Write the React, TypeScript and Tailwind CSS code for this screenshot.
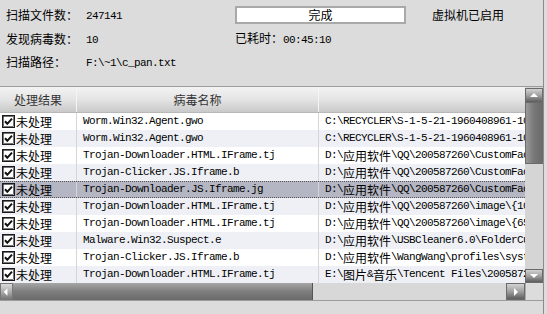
import React from "react";

const CJK = /[\u3000-\u9fff\uff00-\uffef]/;

// mixes the bitmap-ish mono look for ascii with 12px CJK glyphs
const Txt = ({ s }: { s: string }) => {
  const parts = s.match(/[\u3000-\u9fff\uff00-\uffef]+|[^\u3000-\u9fff\uff00-\uffef]+/g) || [];
  return (
    <>
      {parts.map((p, i) =>
        CJK.test(p) ? (
          <span key={i} className="font-['Noto_Sans_CJK_SC',sans-serif] text-[12px] tracking-normal">
            {p}
          </span>
        ) : (
          <span key={i} className="font-['Liberation_Mono',monospace] text-[11px] tracking-[-0.6px] whitespace-pre">
            {p}
          </span>
        )
      )}
    </>
  );
};

const rows = [
  { name: "Worm.Win32.Agent.gwo", path: "C:\\RECYCLER\\S-1-5-21-1960408961-1004336348" },
  { name: "Worm.Win32.Agent.gwo", path: "C:\\RECYCLER\\S-1-5-21-1960408961-1004336348" },
  { name: "Trojan-Downloader.HTML.IFrame.tj", path: "D:\\应用软件\\QQ\\200587260\\CustomFace" },
  { name: "Trojan-Clicker.JS.Iframe.b", path: "D:\\应用软件\\QQ\\200587260\\CustomFace" },
  { name: "Trojan-Downloader.JS.Iframe.jg", path: "D:\\应用软件\\QQ\\200587260\\CustomFace" },
  { name: "Trojan-Downloader.HTML.IFrame.tj", path: "D:\\应用软件\\QQ\\200587260\\image\\{10A3" },
  { name: "Trojan-Downloader.HTML.IFrame.tj", path: "D:\\应用软件\\QQ\\200587260\\image\\{65B2" },
  { name: "Malware.Win32.Suspect.e", path: "D:\\应用软件\\USBCleaner6.0\\FolderCure" },
  { name: "Trojan-Clicker.JS.Iframe.b", path: "D:\\应用软件\\WangWang\\profiles\\system" },
  { name: "Trojan-Downloader.HTML.IFrame.tj", path: "E:\\图片&音乐\\Tencent Files\\200587260" },
];

const Check = () => (
  <svg width="13" height="13" viewBox="0 0 13 13" className="shrink-0">
    <rect x="0.5" y="0.5" width="12" height="12" fill="#fff" stroke="#1a1a1a" />
    <rect x="1.5" y="1.5" width="10" height="10" fill="none" stroke="#1a1a1a" strokeWidth="0.6" />
    <path d="M3 6.3 L5.3 8.8 L10 3.6" fill="none" stroke="#111" strokeWidth="2" />
  </svg>
);

const Arrow = ({ dir }: { dir: "up" | "down" | "left" | "right" }) => {
  const d = {
    up: "M2 7 L6 3 L10 7 Z",
    down: "M2 4 L6 8 L10 4 Z",
    left: "M7 2 L3 6 L7 10 Z",
    right: "M4 2 L8 6 L4 10 Z",
  }[dir];
  return (
    <svg width="12" height="12" viewBox="0 0 12 12">
      <path d={d} fill="#fff" />
    </svg>
  );
};

export default function App() {
  return (
    <div className="w-[547px] h-[314px] bg-[#dcdcdc] overflow-hidden text-black font-['Noto_Sans_CJK_SC',sans-serif] text-[12px]">
      <div className="w-[544px] h-[314px] border-r border-[#8c8c8c] flex flex-col">
        {/* summary */}
        <div className="h-[86px] pt-[3px] pl-[6px] flex flex-col">
          <div className="h-[24px] flex items-center">
            <div className="w-[80px]">扫描文件数：</div>
            <div className="w-[149px]"><Txt s="247141" /></div>
            <div className="w-[171px] h-[18px] border-2 border-[#a9a9a9] bg-white flex items-center justify-center leading-none">
              完成
            </div>
            <div className="ml-[26px]">虚拟机已启用</div>
          </div>
          <div className="h-[24px] flex items-center">
            <div className="w-[80px]">发现病毒数：</div>
            <div className="w-[149px]"><Txt s="10" /></div>
            <div><Txt s="已耗时：00:45:10" /></div>
          </div>
          <div className="h-[22px] flex items-center">
            <div className="w-[80px]">扫描路径：</div>
            <div><Txt s="F:\~1\c_pan.txt" /></div>
          </div>
        </div>

        {/* table */}
        <div className="border-t border-[#9c9c9c] flex">
          <div className="w-[525px] overflow-hidden">
            <div className="h-[26px] flex border-b border-[#b8b8b8] bg-linear-to-b from-[#f3f3f3] via-[#e4e4e4] to-[#c9c9c9] text-[#333] text-[12px]">
              <div className="w-[77px] border-r border-[#f4f4f4] flex items-center justify-center">处理结果</div>
              <div className="w-[242px] border-r border-[#f4f4f4] flex items-center justify-center">病毒名称</div>
              <div className="flex-1" />
            </div>
            {rows.map((r, i) => {
              const sel = i === 4;
              const bg = sel ? "bg-[#b4b6c3]" : i % 2 === 1 ? "bg-[#eef0f5]" : "bg-white";
              return (
                <div
                  key={i}
                  className={`h-[17px] flex whitespace-nowrap ${bg} ${
                    sel ? "border-y border-dotted border-[#555]" : ""
                  }`}
                >
                  <div className="w-[77px] shrink-0 border-r border-[#d6d6d6] flex items-center pl-[2px] gap-[1px]">
                    <Check />
                    <span>未处理</span>
                  </div>
                  <div className="w-[242px] shrink-0 border-r border-[#d6d6d6] flex items-center pl-[6px] overflow-hidden">
                    <Txt s={r.name} />
                  </div>
                  <div className="flex-1 flex items-center pl-[6px] overflow-hidden">
                    <Txt s={r.path} />
                  </div>
                </div>
              );
            })}
          </div>

          {/* vertical scrollbar */}
          <div className="w-[18px] flex flex-col bg-[#d5d5d5]">
            <div className="mt-[1px] h-[15px] border border-[#6a6a6a] bg-linear-to-b from-[#d2d2d2] via-[#a0a0a0] to-[#5e5e5e] flex items-center justify-center">
              <Arrow dir="up" />
            </div>
            <div className="h-[61px] border-x border-b border-[#6a6a6a] bg-linear-to-r from-[#9a9a9a] via-[#777] to-[#6c6c6c]" />
            <div className="flex-1" />
            <div className="h-[14px] border border-[#6a6a6a] bg-linear-to-b from-[#d2d2d2] via-[#a0a0a0] to-[#5e5e5e] flex items-center justify-center">
              <Arrow dir="down" />
            </div>
          </div>
        </div>

        {/* horizontal scrollbar */}
        <div className="h-[18px] flex bg-[#d8d8d8] border-b border-[#9c9c9c]">
          <div className="w-[13px] border border-[#777] bg-linear-to-b from-[#dadada] via-[#b0b0b0] to-[#777] flex items-center justify-center">
            <Arrow dir="left" />
          </div>
          <div className="w-[300px] bg-linear-to-b from-[#a6a6a6] via-[#7e7e7e] to-[#6a6a6a] border-r border-[#555]" />
          <div className="w-[193px]" />
          <div className="w-[19px] border border-[#6a6a6a] bg-linear-to-b from-[#d2d2d2] via-[#a0a0a0] to-[#5e5e5e] flex items-center justify-center">
            <Arrow dir="right" />
          </div>
          <div className="flex-1 border-l border-[#aaa] bg-[#dcdcdc]" />
        </div>
      </div>
    </div>
  );
}
